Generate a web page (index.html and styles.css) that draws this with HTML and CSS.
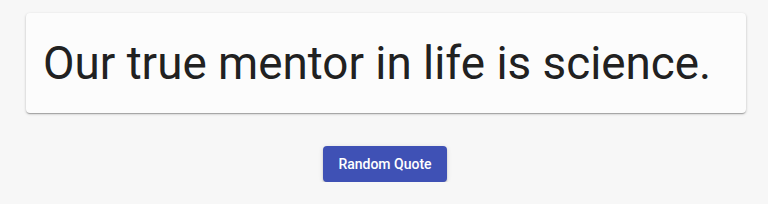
FILE: index.html
```html
<!DOCTYPE html>
<html lang="en">
<head>
    <meta charset="UTF-8">
    <title>Random Quote</title>
    <link rel="stylesheet" href="styles.css">
</head>
<body>
    <div class="app">
        <div class="quote-card">
            <p class="quote-text">Our true mentor in life is science.</p>
        </div>
        <button class="quote-btn">Random Quote</button>
    </div>
</body>
</html>
```

FILE: styles.css
```css
body {
    margin: 0;
    font-family: Roboto, "Liberation Sans", sans-serif;
    background-color: #f7f7f7;
}

.app {
    display: flex;
    flex-direction: column;
    align-items: center;
    padding: 13px 22px 0 26px;
}

.quote-card {
    box-sizing: border-box;
    width: 720px;
    height: 100px;
    padding: 0 16px 0 17px;
    display: flex;
    align-items: center;
    background-color: #fcfcfc;
    border-radius: 4px;
    box-shadow: 0 1px 3px rgba(0, 0, 0, 0.2), 0 1px 1px rgba(0, 0, 0, 0.14), 0 2px 1px -1px rgba(0, 0, 0, 0.12);
}

.quote-text {
    margin: 0;
    font-size: 45.8px;
    white-space: nowrap;
    color: #212121;
}

.quote-btn {
    margin: 33px 2px 0 0;
    width: 124px;
    height: 36px;
    border: none;
    border-radius: 4px;
    background-color: #3f51b5;
    color: white;
    font-family: Roboto, "Liberation Sans", sans-serif;
    font-size: 14px;
    font-weight: 500;
    cursor: pointer;
    box-shadow: 0 3px 1px -2px rgba(0, 0, 0, 0.2), 0 2px 2px 0 rgba(0, 0, 0, 0.14), 0 1px 5px 0 rgba(0, 0, 0, 0.12);
}
```
